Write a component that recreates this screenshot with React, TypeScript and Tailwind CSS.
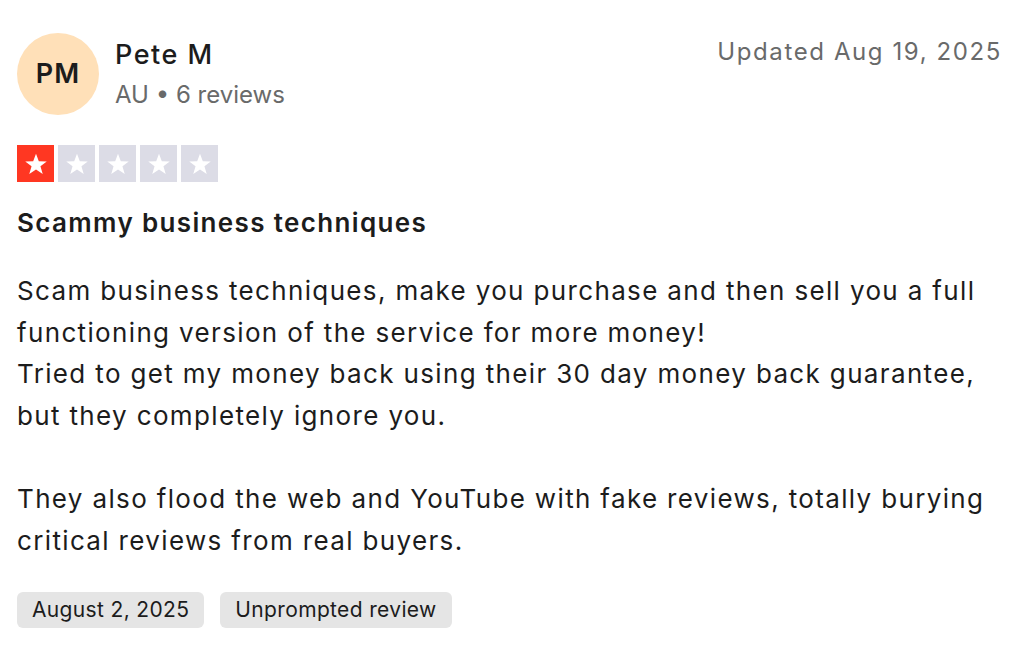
import React from "react";

const Star = ({ filled }: { filled: boolean }) => (
  <div className={`flex h-[37px] w-[37px] items-center justify-center ${filled ? "bg-[#ff3722]" : "bg-[#dcdce6]"}`}>
    <svg width="26" height="26" viewBox="0 0 24 24">
      <path d="M12 2.5l2.6 6.9 7.3.2-5.8 4.5 2.1 7.1L12 17l-6.2 4.2 2.1-7.1-5.8-4.5 7.3-.2z" fill="#ffffff" />
    </svg>
  </div>
);

export default function App() {
  const lines1 = [
    "Scam business techniques, make you purchase and then sell you a full",
    "functioning version of the service for more money!",
    "Tried to get my money back using their 30 day money back guarantee,",
    "but they completely ignore you.",
  ];
  const lines2 = [
    "They also flood the web and YouTube with fake reviews, totally burying",
    "critical reviews from real buyers.",
  ];
  return (
    <div className="h-[649px] w-[1024px] bg-white pl-[17px] pr-[22px] pt-[33px] text-[#191919]" style={{ fontFamily: "Inter, 'Liberation Sans', sans-serif" }}>
      <div className="flex items-start justify-between">
        <div className="flex items-center gap-[16px]">
          <div className="flex h-[82px] w-[82px] items-center justify-center rounded-full bg-[#ffe0b8] text-[27px] font-semibold tracking-[1px] text-[#1c1c1c]">
            PM
          </div>
          <div className="flex flex-col">
            <div className="text-[27px] font-medium leading-[36px] tracking-[1.5px] text-[#1c1c1c]">Pete M</div>
            <div className="mt-[6px] text-[24px] leading-[32px] text-[#696a6a]">AU • 6 reviews</div>
          </div>
        </div>
        <div className="mt-[1px] text-[24px] leading-[36px] tracking-[1.6px] text-[#696a6a]">Updated Aug 19, 2025</div>
      </div>
      <div className="mt-[30px] flex gap-[4px]">
        <Star filled />
        <Star filled={false} />
        <Star filled={false} />
        <Star filled={false} />
        <Star filled={false} />
      </div>
      <h2 className="mt-[21px] text-[26px] font-semibold leading-[40px] tracking-[1.35px] text-[#1c1c1c]">Scammy business techniques</h2>
      <div className="mt-[27px] text-[26px] leading-[41.6px] tracking-[1.35px] text-[#1c1c1c]">
        {lines1.map((l) => (
          <div key={l} className="whitespace-nowrap">{l}</div>
        ))}
        <div className="h-[41.6px]" />
        {lines2.map((l) => (
          <div key={l} className="whitespace-nowrap">{l}</div>
        ))}
      </div>
      <div className="mt-[31px] flex gap-[16px]">
        <span className="rounded-[6px] bg-[#e5e5e5] px-[15px] text-[21px] leading-[36px] tracking-[0.35px] text-[#1c1c1c]">August 2, 2025</span>
        <span className="rounded-[6px] bg-[#e5e5e5] px-[15px] text-[21px] leading-[36px] tracking-[0.35px] text-[#1c1c1c]">Unprompted review</span>
      </div>
    </div>
  );
}
